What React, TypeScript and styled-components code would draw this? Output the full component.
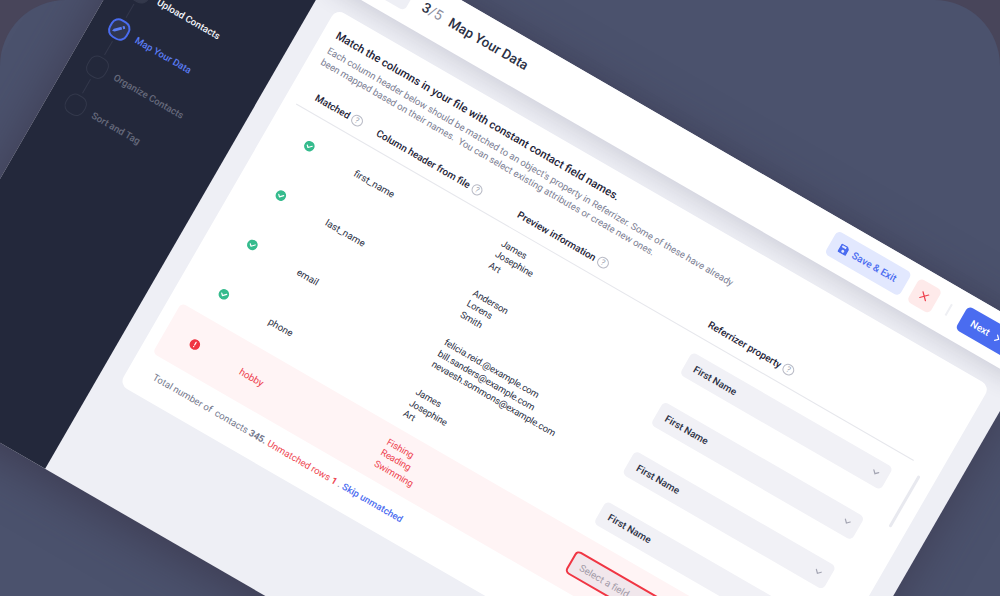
import { FunctionComponent } from "react"
import styled, { createGlobalStyle, css } from "styled-components"

type StepState = 'done' | 'active' | 'idle';

const steps: { label: string; state: StepState }[] = [
  { label: 'Upload Contacts', state: 'done' },
  { label: 'Map Your Data', state: 'active' },
  { label: 'Organize Contacts', state: 'idle' },
  { label: 'Sort and Tag', state: 'idle' },
];

const columns = ['Matched', 'Column header from file', 'Preview information', 'Referrizer property'];

const rows = [
  { name: 'first_name', preview: ['James', 'Josephine', 'Art'], field: 'First Name' },
  { name: 'last_name', preview: ['Anderson', 'Lorens', 'Smith'], field: 'First Name' },
  { name: 'email', preview: ['felicia.reid.@example.com', 'bill.sanders@example.com', 'nevaesh.sommons@example.com'], field: 'First Name' },
  { name: 'phone', preview: ['James', 'Josephine', 'Art'], field: 'First Name' },
  { name: 'hobby', preview: ['Fishing', 'Reading', 'Swimming'], field: '' },
];

const PencilIcon = () => (
  <svg width="14" height="14" viewBox="0 0 12 12">
    <path d="M1.6 10.4l.5-2.3 4.7-4.7 1.8 1.8-4.7 4.7z" fill="#5b7df5" />
    <path d="M7.5 2.7l.8-.8a.7.7 0 0 1 1 0l.8.8a.7.7 0 0 1 0 1l-.8.8z" fill="#5b7df5" />
  </svg>
);

const SaveIcon = () => (
  <svg width="10" height="10" viewBox="0 0 10 10">
    <path fillRule="evenodd" fill="#4a6cf0" d="M1.4.3h5.9l2.4 2.4v5.9c0 .6-.5 1.1-1.1 1.1H1.4C.8 9.7.3 9.2.3 8.6V1.4C.3.8.8.3 1.4.3zM2 1.6v2h4.6v-2zM5 5.3a1.5 1.5 0 1 0 0 3 1.5 1.5 0 0 0 0-3z" />
  </svg>
);

const CloseIcon = () => (
  <svg width="10" height="10" viewBox="0 0 10 10">
    <path d="M1.7 1.7l6.600 6.600M8.300 1.700l-6.600 6.600" stroke="#ee3f4c" strokeWidth="1.2" strokeLinecap="round" />
  </svg>
);

const NextIcon = () => (
  <svg width="5" height="8" viewBox="0 0 5 8">
    <path d="M1 1l3 3-3 3" stroke="#fff" strokeWidth="1.2" fill="none" strokeLinecap="round" />
  </svg>
);

const ArrowDown = () => (
  <svg width="8" height="6" viewBox="0 0 8 6">
    <path d="M1.2 1.5L4 4.3l2.8-2.8" stroke="#a3a4b2" strokeWidth="1.2" fill="none" strokeLinecap="round" />
  </svg>
);

const CheckIcon = () => (
  <svg width="11" height="11" viewBox="0 0 11 11">
    <circle cx="5.5" cy="5.5" r="5.3" fill="#35bb8d" />
    <path d="M3.1 5.5l1.8 1.8 3.1-3.2" stroke="#fff" strokeWidth="1.2" fill="none" strokeLinecap="round" strokeLinejoin="round" />
  </svg>
);

const AlertIcon = () => (
  <svg width="11" height="11" viewBox="0 0 11 11">
    <circle cx="5.5" cy="5.5" r="5.3" fill="#f03543" />
    <path d="M5.5 3v3" stroke="#fff" strokeWidth="1.2" strokeLinecap="round" />
    <circle cx="5.5" cy="7.9" r=".7" fill="#fff" />
  </svg>
);

const App: FunctionComponent = () => {
  return (
    <>
      <GlobalStyle />
      <Stage>
        <Backdrop>
          <Window>
            <Sidebar>
              {steps.map((step) => (
                <Step key={step.label} $state={step.state}>
                  <StepBox $state={step.state}>{step.state === 'active' && <PencilIcon />}</StepBox>
                  {step.label}
                </Step>
              ))}
            </Sidebar>
            <Main>
              <Header>
                <BackButton aria-label="Back" />
                <Counter>3<span>/5</span></Counter>
                <PageTitle>Map Your Data</PageTitle>
                <SaveButton><SaveIcon />Save &amp; Exit</SaveButton>
                <CancelButton aria-label="Cancel"><CloseIcon /></CancelButton>
                <Divider />
                <NextButton>Next<NextIcon /></NextButton>
              </Header>
              <Card>
                <CardTitle>Match the columns in your file with constant contact field names.</CardTitle>
                <Description>
                  Each column header below should be matched to an object's property in Referrizer. Some of these have already<br />
                  been mapped based on their names.&nbsp; You can select existing attributes or create new ones.
                </Description>
                <TableHead>
                  {columns.map((name) => (
                    <HeadCell key={name}>{name}<Help>?</Help></HeadCell>
                  ))}
                </TableHead>
                <TableBody>
                  <div>
                    {rows.map((row) => (
                      <Row key={row.name} $error={!row.field}>
                        <StatusCell>{row.field ? <CheckIcon /> : <AlertIcon />}</StatusCell>
                        <NameCell>{row.name}</NameCell>
                        <Preview>{row.preview.map((text) => <div key={text}>{text}</div>)}</Preview>
                        <Select $error={!row.field}>{row.field || 'Select a field'}<ArrowDown /></Select>
                      </Row>
                    ))}
                  </div>
                  <Scrollbar />
                </TableBody>
                <Summary>
                  Total number of&nbsp; contacts <b>345.</b> <Unmatched>Unmatched rows <b>1</b></Unmatched> . <Skip>Skip unmatched</Skip>
                </Summary>
              </Card>
            </Main>
          </Window>
        </Backdrop>
      </Stage>
    </>
  )
}

const GlobalStyle = createGlobalStyle`
body{
    margin:0;
    background:#48455a;
}
*{
    box-sizing:border-box;
}
button{
    border:none;
    padding:0;
    font-family:inherit;
}
`;

const Stage = styled.div`
    width:1000px;
    height:596px;
    overflow:hidden;
    background:#48455a;
    font-family: Roboto, "Liberation Sans", sans-serif;
    font-size:10px;
    color:#2b3044;
`;

const Backdrop = styled.div`
    height:100%;
    overflow:hidden;
    border-radius:66px 66px 0 0;
    background:#4b526d;
`;

const Window = styled.div`
    display:flex;
    width:982px;
    height:613.5px;
    transform-origin:0 0;
    transform:translate(192.8px, -154.9px) rotate(30deg);
    box-shadow:0 10px 48px rgba(54, 46, 66, 0.6);
    background:#eeeff5;
`;

const Sidebar = styled.div`
    flex:none;
    width:183.5px;
    padding:142.1px 0 0 17.6px;
    background:#23283b;
`;

const stepColors = { done: '#f4f5f9', active: '#5b7df5', idle: '#666a7b' };

const Step = styled.div<{ $state: StepState }>`
    position:relative;
    display:flex;
    align-items:center;
    gap:8.8px;
    height:21.5px;
    margin-bottom:22px;
    font-size:9.6px;
    font-weight:500;
    color:${({ $state }) => stepColors[$state]};
    &:not(:last-child)::after{
        content:"";
        position:absolute;
        left:10px;
        top:24.5px;
        width:1.3px;
        height:16px;
        background:#33384b;
    }
`;

const StepBox = styled.div<{ $state: StepState }>`
    display:flex;
    align-items:center;
    justify-content:center;
    width:21.5px;
    height:21.5px;
    border-radius:8.5px;
    border:1.4px solid #33384b;
    ${({ $state }) => $state === 'done' && css`background:#33384b;`}
    ${({ $state }) => $state === 'active' && css`
        background:#30364f;
        border:2px solid #4a6cf0;
    `}
`;

const Main = styled.div`
    flex:1;
    min-width:0;
`;

const Header = styled.div`
    display:flex;
    align-items:center;
    height:49.5px;
    padding:0 21px 0 34px;
    background:#fff;
    box-shadow:0 6px 22px rgba(50, 50, 80, 0.16);
`;

const BackButton = styled.button`
    width:48px;
    height:27px;
    border-radius:5px;
    background:#eeeff5;
`;

const Counter = styled.div`
    margin:-1px 0 0 14.5px;
    font-size:14px;
    font-weight:500;
    span{
        color:#8b8d9d;
        font-weight:400;
    }
`;

const PageTitle = styled.div`
    margin:-1px auto 0 9px;
    font-size:13.6px;
    font-weight:500;
`;

const Button = styled.button`
    display:flex;
    align-items:center;
    height:27px;
    border-radius:5px;
    font-size:10px;
    font-weight:500;
`;

const SaveButton = styled(Button)`
    gap:5px;
    width:86.5px;
    padding-left:10.8px;
    background:#e2e8fe;
    color:#4a6cf0;
`;

const CancelButton = styled(Button)`
    justify-content:center;
    width:26px;
    margin-left:8.5px;
    background:#feeaea;
`;

const Divider = styled.div`
    width:2px;
    height:13px;
    margin:0 14px;
    background:#eeeff3;
`;

const NextButton = styled(Button)`
    gap:7.5px;
    width:59.5px;
    padding-left:11.5px;
    background:#4a6cf0;
    color:#fff;
`;

const Card = styled.div`
    height:434px;
    width:755px;
    margin:20.5px 0 0 22px;
    padding:16.4px 8px 0 13px;
    border-radius:9px;
    background:#fff;
`;

const CardTitle = styled.div`
    padding-left:1px;
    line-height:14px;
    font-size:11.18px;
    font-weight:500;
    white-space:nowrap;
    color:#1e2337;
`;

const Description = styled.div`
    padding-left:1px;
    margin-top:4px;
    line-height:12.7px;
    font-size:9.52px;
    white-space:nowrap;
    color:#7a7d92;
`;

const grid = css`
    display:grid;
    grid-template-columns:84px 163px 220px 232px;
`;

const TableHead = styled.div`
    ${grid}
    align-items:center;
    width:713.7px;
    height:33px;
    margin-top:10.6px;
    border-bottom:1px solid #e6e7ec;
`;

const HeadCell = styled.div`
    display:flex;
    align-items:center;
    gap:3px;
    padding-left:.8px;
    font-size:9.9px;
    font-weight:500;
    white-space:nowrap;
    color:#1e2337;
    &:first-child{
        padding-left:14px;
    }
`;

const Help = styled.span`
    display:flex;
    align-items:center;
    justify-content:center;
    width:11.4px;
    height:11.4px;
    border:1px solid #b9bbc6;
    border-radius:50%;
    font-size:8px;
    line-height:9px;
    font-weight:400;
    color:#9c9fae;
`;

const TableBody = styled.div`
    display:flex;
    gap:10.8px;
`;

const Row = styled.div<{ $error: boolean }>`
    ${grid}
    align-items:center;
    width:713.7px;
    height:57.25px;
    border-radius:5px;
    ${({ $error }) => $error && css`
        background:#fff4f5;
        color:#ee4450;
    `}
`;

const StatusCell = styled.div`
    display:flex;
    padding-left:27.6px;
`;

const NameCell = styled.div`
    padding-left:1.3px;
    font-size:9.7px;
`;

const Preview = styled.div`
    padding:.6px 0 0 1.2px;
    font-size:9.4px;
    line-height:12.5px;
    letter-spacing:-.1px;
`;

const Select = styled.div<{ $error: boolean }>`
    display:flex;
    align-items:center;
    justify-content:space-between;
    height:26.5px;
    padding:0 8.5px 0 10.5px;
    border-radius:5px;
    background:#f1f1f6;
    color:#2b3044;
    font-size:9.8px;
    font-weight:500;
    ${({ $error }) => $error && css`
        margin-left:-1px;
        padding:0 7px 0 10px;
        background:#f1e7ec;
        border:2px solid #f03543;
        color:#a29ba8;
        font-weight:400;
    `}
`;

const Scrollbar = styled.div`
    width:3px;
    height:59px;
    margin-top:9.5px;
    border-radius:2px;
    background:#e8e9ef;
`;

const Summary = styled.div`
    padding:13.8px 0 0 13.4px;
    font-size:9.48px;
    line-height:14px;
    white-space:nowrap;
    color:#73778c;
`;

const Unmatched = styled.span`
    color:#ee4450;
`;

const Skip = styled.span`
    font-weight:500;
    color:#4a6cf0;
`;

export default App
